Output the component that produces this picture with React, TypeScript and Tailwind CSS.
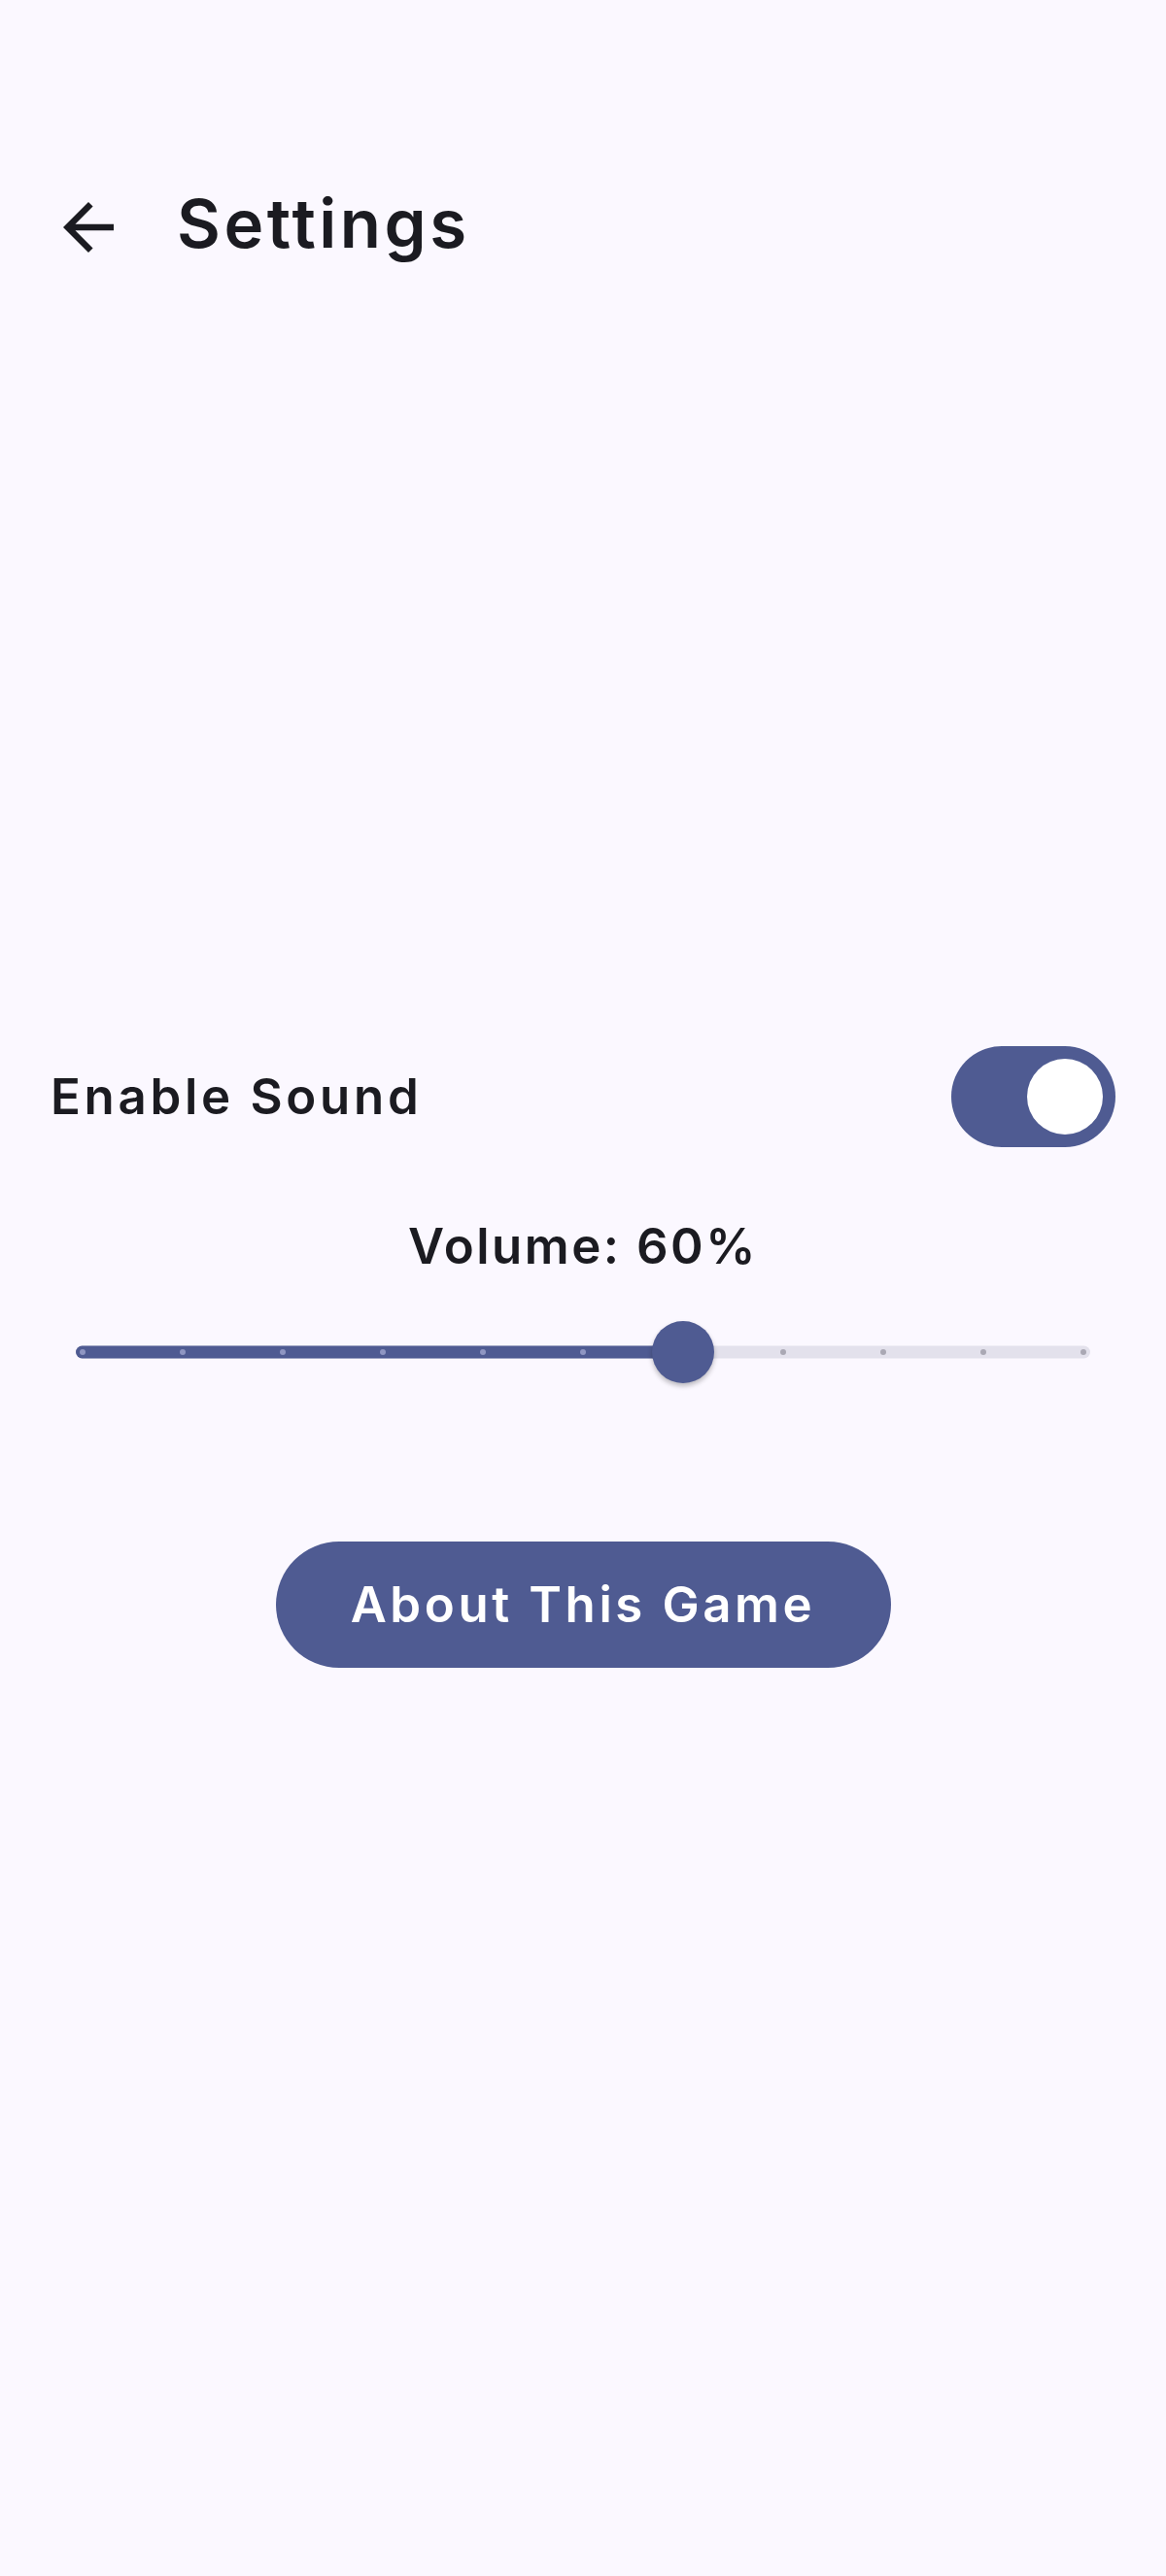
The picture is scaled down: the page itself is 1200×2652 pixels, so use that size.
import React, { useState } from "react";

const ArrowBack = () => (
    <svg width="78" height="78" viewBox="0 0 24 24" fill="#1b1b21">
        <path d="M20 11H7.83l5.59-5.59L12 4l-8 8 8 8 1.41-1.41L7.83 13H20v-2z" />
    </svg>
);

const Switch = ({ on, onChange }: { on: boolean; onChange: () => void }) => (
    <button
        onClick={onChange}
        className={
            "flex h-[104px] w-[169px] items-center rounded-full px-[13px] " +
            (on ? "justify-end bg-[#4f5b92]" : "justify-start bg-[#e3e1ec]")
        }
    >
        <span className="block h-[78px] w-[78px] rounded-full bg-white" />
    </button>
);

const VolumeSlider = ({ value }: { value: number }) => {
    const ticks = Array.from({ length: 11 }, (_, i) => i);
    const pos = 6.5 + (value / 100) * 1030;
    return (
        <div className="relative mx-[78px] h-[64px]">
            <div className="absolute inset-x-0 top-1/2 h-[13px] -translate-y-1/2 rounded-full bg-[#e3e1ec]" />
            <div
                className="absolute left-0 top-1/2 h-[13px] -translate-y-1/2 rounded-full bg-[#4f5b92]"
                style={{ width: pos }}
            />
            <div className="absolute inset-x-[3.5px] top-1/2 flex -translate-y-1/2 items-center justify-between">
                {ticks.map((t) => (
                    <span
                        key={t}
                        className={
                            "block h-[6px] w-[6px] rounded-full " +
                            (t * 10 <= value ? "bg-[#8f96c2]" : "bg-[#aaa8b4]")
                        }
                    />
                ))}
            </div>
            <div
                className="absolute top-0 h-[64px] w-[64px] -translate-x-1/2 rounded-full bg-[#4f5b92] shadow-[0_3px_5px_rgba(0,0,0,0.25)]"
                style={{ left: pos }}
            />
        </div>
    );
};

export default function App() {
    const [sound, setSound] = useState(true);
    const volume = 60;

    return (
        <div
            className="min-h-[2652px] w-full bg-[#fbf8ff] pt-[130px] text-[#1b1b21]"
            style={{ fontFamily: "Inter, 'Noto Sans', sans-serif" }}
        >
            <header className="flex h-[208px] items-center">
                <button className="ml-[52px] flex h-[78px] w-[78px] items-center justify-center">
                    <ArrowBack />
                </button>
                <h1 className="mb-[8px] ml-[52px] text-[69px] leading-[80px] font-semibold tracking-[3.5px]">
                    Settings
                </h1>
            </header>

            <main className="mt-[739px] flex flex-col">
                <div className="flex h-[104px] items-center justify-between px-[52px]">
                    <span className="text-[51px] leading-[62px] font-semibold tracking-[3.7px]">
                        Enable Sound
                    </span>
                    <Switch on={sound} onChange={() => setSound(!sound)} />
                </div>

                <p className="mt-[71px] text-center text-[51px] leading-[62px] font-semibold tracking-[2.5px]">
                    Volume: {volume}%
                </p>

                <div className="mt-[46px]">
                    <VolumeSlider value={volume} />
                </div>

                <div className="mt-[163px] flex justify-center">
                    <button className="h-[130px] w-[633px] rounded-full bg-[#4f5b92] text-[51px] font-semibold tracking-[3.6px] text-white">
                        About This Game
                    </button>
                </div>
            </main>
        </div>
    );
}
